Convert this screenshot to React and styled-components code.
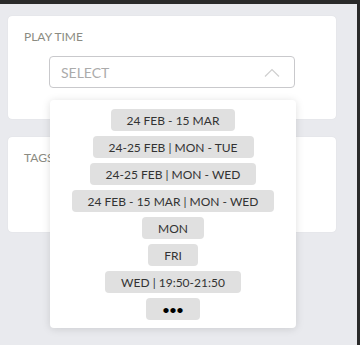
import React from 'react';
import styled, { createGlobalStyle } from 'styled-components';

const GlobalStyle = createGlobalStyle`
  body {
    margin: 0;
    background: #e9eaee;
    font-family: 'Lato', 'Open Sans', sans-serif;
  }
`;

const options = [
  '24 FEB - 15 MAR',
  '24-25 FEB | MON - TUE',
  '24-25 FEB | MON - WED',
  '24 FEB - 15 MAR | MON - WED',
  'MON',
  'FRI',
  'WED | 19:50-21:50',
];

function Chevron() {
  return (
    <svg width="16" height="9" viewBox="0 0 16 9" fill="none">
      <path d="M1 8.5L8 1.5L15 8.5" stroke="#cfcfcf" strokeWidth="1.2" />
    </svg>
  );
}

function App() {
  return (
    <Frame>
      <GlobalStyle />
      <Card height={103}>
        <Label>PLAY TIME</Label>
        <SelectWrap>
          <SelectBox>
            <Placeholder>SELECT</Placeholder>
            <Chevron />
          </SelectBox>
          <Dropdown>
            {options.map((o) => (
              <Pill key={o}>{o}</Pill>
            ))}
            <Pill dots>•••</Pill>
          </Dropdown>
        </SelectWrap>
      </Card>
      <Card height={95} gap={18}>
        <Label>TAGS</Label>
      </Card>
    </Frame>
  );
}

const Frame = styled.div`
  box-sizing: border-box;
  min-height: 345px;
  border-top: 4px solid #2a2a2a;
  border-right: 3px solid #2a2a2a;
  padding: 12px 21px 0 8px;
`;

const Card = styled.div`
  box-sizing: border-box;
  height: ${(p) => p.height}px;
  margin-top: ${(p) => p.gap || 0}px;
  background: #fff;
  border-radius: 4px;
  box-shadow: 0 0 1px rgba(0, 0, 0, 0.12);
  padding: 14px 16px;
`;

const Label = styled.div`
  font-size: 12px;
  line-height: 14px;
  color: #8b8b82;
`;

const SelectWrap = styled.div`
  position: relative;
  width: 246px;
  margin: 12px auto 0;
`;

const SelectBox = styled.div`
  box-sizing: border-box;
  height: 32px;
  border: 1px solid #c9c9cc;
  border-radius: 4px;
  padding: 0 14px 0 11px;
  display: flex;
  align-items: center;
  justify-content: space-between;
`;

const Placeholder = styled.span`
  font-size: 14px;
  color: #ababab;
`;

const Dropdown = styled.div`
  position: absolute;
  top: calc(100% + 12px);
  left: 1px;
  width: 246px;
  box-sizing: border-box;
  background: #fff;
  border-radius: 4px;
  box-shadow: 0 1px 8px rgba(0, 0, 0, 0.13);
  padding: 9px 0 8px;
  display: flex;
  flex-direction: column;
  align-items: center;
  gap: 5px;
  z-index: 2;
`;

const Pill = styled.div`
  height: 22px;
  display: flex;
  align-items: center;
  padding: 0 ${(p) => (p.dots ? 17 : 16)}px;
  background: #e0e0e0;
  border-radius: 4px;
  font-size: ${(p) => (p.dots ? 12 : 12)}px;
  font-weight: ${(p) => (p.dots ? 700 : 400)};
  color: ${(p) => (p.dots ? '#000' : '#333')};
  white-space: nowrap;
`;

export default App;
